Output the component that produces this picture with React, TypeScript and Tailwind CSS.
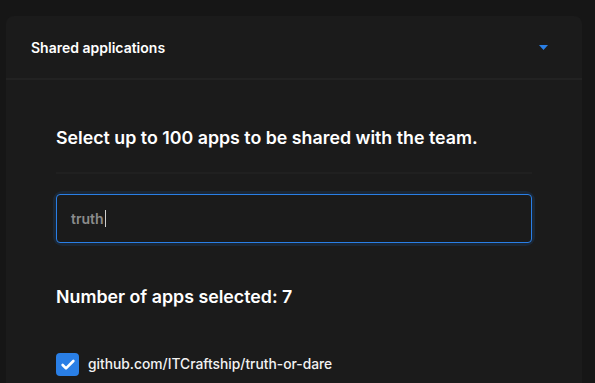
import { Check } from 'lucide-react';

export default function App() {
  return (
    <div
      className="min-h-[383px] w-full bg-[#161616] pt-4 pl-1.5 pr-[13px] overflow-hidden"
      style={{ fontFamily: 'Inter, "Open Sans", sans-serif' }}
    >
      <div className="bg-[#1b1b1b] rounded-t-lg min-h-[367px]">
        {/* Header */}
        <div className="flex items-center justify-between h-16 pl-[25px] pr-[34px] border-b-2 border-[#222222]">
          <h2 className="text-white text-[14px] font-semibold">Shared applications</h2>
          <svg width="9" height="6" viewBox="0 0 9 6" className="mt-px">
            <path d="M0 0 H9 L4.5 5 Z" fill="#2a7fe6" />
          </svg>
        </div>

        {/* Body */}
        <div className="px-[50px] pt-[46px]">
          <p className="text-white text-[17.8px] font-semibold leading-6 pb-[22px] border-b-2 border-[#202020]">
            Select up to 100 apps to be shared with the team.
          </p>

          <div className="mt-5 rounded-md ring-[3px] ring-[#1b2735]">
            <div className="h-[49px] rounded-[4px] border border-[#2a7fe6] flex items-center pl-[14px]">
              <span className="text-[#8c8c8c] text-[14px] font-semibold">truth</span>
              <span className="w-px h-[17px] bg-[#cfcfcf] ml-px" />
            </div>
          </div>

          <p className="text-white text-[17.8px] font-semibold mt-[42px] leading-6">Number of apps selected: 7</p>

          <label className="flex items-center gap-[9px] mt-[44px]">
            <span className="w-[23px] h-[23px] rounded-[4px] bg-[#2a7fe6] flex items-center justify-center">
              <Check className="w-4 h-4 text-white" strokeWidth={4} />
            </span>
            <span className="text-[#f2f2f2] text-[13.8px] font-medium">github.com/ITCraftship/truth-or-dare</span>
          </label>
        </div>
      </div>
    </div>
  );
}
